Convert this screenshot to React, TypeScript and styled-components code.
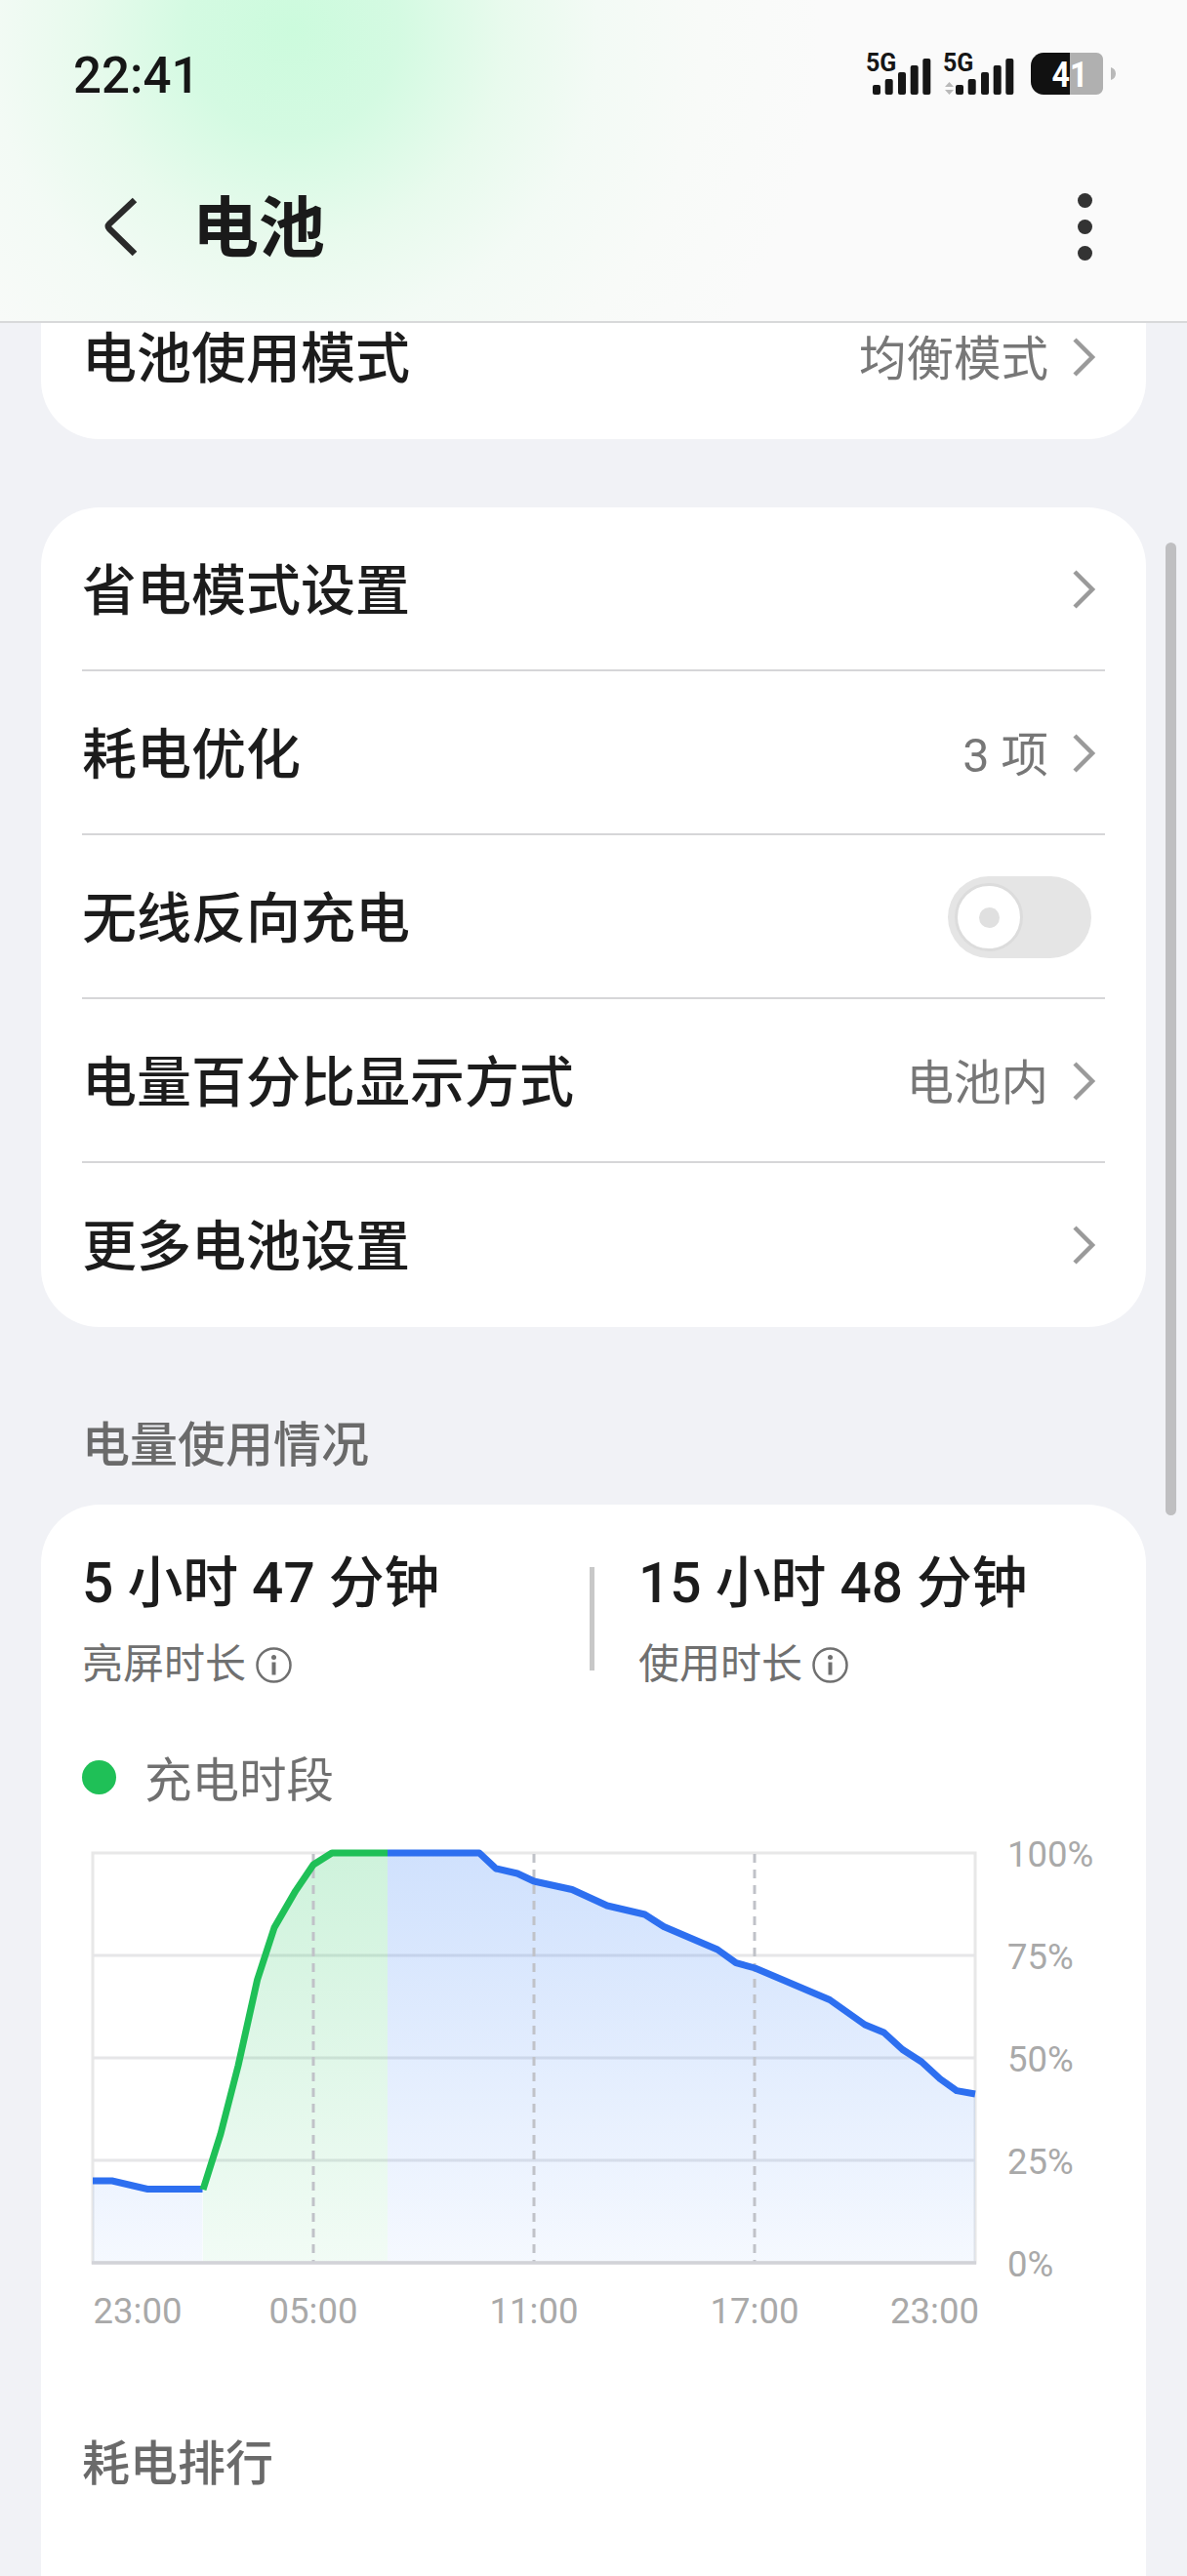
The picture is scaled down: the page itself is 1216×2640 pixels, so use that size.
import styled, { createGlobalStyle } from 'styled-components';

const FONT = `Roboto, "Noto Sans CJK SC", sans-serif`;

const GlobalStyle = createGlobalStyle`
  html, body {
    margin: 0;
    padding: 0;
    background: #f1f2f6;
    font-family: ${FONT};
  }
`;

type RowData = {
  label: string;
  value?: string;
  toggle?: boolean;
};

const rows: RowData[] = [
  { label: '省电模式设置' },
  { label: '耗电优化', value: '3 项' },
  { label: '无线反向充电', toggle: true },
  { label: '电量百分比显示方式', value: '电池内' },
  { label: '更多电池设置' },
];

const blueBefore = '95,2235 115,2235 151,2243.5 207.5,2243.5';
const greenCurve =
  '208,2244 226,2187 244,2117 263.6,2029 281,1975.5 303,1937.6 321,1911 340,1899 397,1899';
const blueAfter =
  '397,1899 491,1899 508,1915 530,1920 547,1928 586,1936.5 622,1953 660.5,1962 680,1974.5 735,1998 754,2011.6 773.5,2017 850,2049.5 886,2075 905.5,2083 924.6,2100.5 944,2113 963,2130.5 980,2142.6 999,2146';

const gridY = [2004, 2109, 2214];
const dashX = [321, 547, 773];
const percents = [
  { y: 1899, text: '100%' },
  { y: 2004, text: '75%' },
  { y: 2109, text: '50%' },
  { y: 2214, text: '25%' },
  { y: 2319, text: '0%' },
];
const barTops = [57, 51, 44, 37, 30];

function StatusIcons() {
  const bars = (xs: number[]) =>
    xs.map((x, i) => (
      <rect key={x} x={x} y={barTops[i]} width={8} height={67 - barTops[i]} rx={2} fill="#161616" />
    ));
  return (
    <svg width={300} height={80} viewBox="0 0 300 80">
      <text x={27} y={43} fontFamily="Roboto, sans-serif" fontWeight={700} fontSize={25} fill="#161616">5G</text>
      {bars([34, 46.7, 60, 72.7, 85.3])}
      <text x={106} y={43} fontFamily="Roboto, sans-serif" fontWeight={700} fontSize={25} fill="#161616">5G</text>
      <path d="M108 59l4.500-5 4.500 5zM108 62h9l-4.500 5z" fill="#b9b9b9" />
      {bars([119, 131.7, 145, 157.7, 170.3])}
      <path d="M236 24h-27c-7 0-13 6-13 13v17c0 7 6 13 13 13h27z" fill="#111" />
      <path d="M236 24h27c4 0 7 3 7 7v29c0 4-3 7-7 7h-27z" fill="#b0b0b0" />
      <path d="M278 39c3 1 5 3 5 6.500s-2 5.500-5 6.500z" fill="#b9b9b9" />
      <text x={236} y={59} textAnchor="middle" textLength={37} lengthAdjust="spacingAndGlyphs" fontFamily="Roboto, sans-serif" fontWeight={700} fontSize={37} fill="#fff">41</text>
    </svg>
  );
}

function BatteryChart() {
  return (
    <ChartSvg viewBox="84 1880 1048 520">
      <defs>
        <linearGradient id="blueFill" gradientUnits="userSpaceOnUse" x1="0" y1="1899" x2="0" y2="2319">
          <stop offset="0" stopColor="#3a82f7" stopOpacity="0.24" />
          <stop offset="1" stopColor="#3a82f7" stopOpacity="0.05" />
        </linearGradient>
        <linearGradient id="greenFill" gradientUnits="userSpaceOnUse" x1="0" y1="1899" x2="0" y2="2319">
          <stop offset="0" stopColor="#22c55e" stopOpacity="0.22" />
          <stop offset="1" stopColor="#22c55e" stopOpacity="0.06" />
        </linearGradient>
      </defs>
      <path d="M95 1899H999V2319H95Z" fill="none" stroke="#e8e8e8" strokeWidth={3} />
      {gridY.map((y) => (
        <line key={y} x1={95} x2={999} y1={y} y2={y} stroke="#e6e6e8" strokeWidth={3} />
      ))}
      <polygon points={`95,2319 ${blueBefore} 207.5,2319`} fill="url(#blueFill)" />
      <polygon points={`208,2319 ${greenCurve} 397,2319`} fill="url(#greenFill)" />
      <polygon points={`397,2319 ${blueAfter} 999,2319`} fill="url(#blueFill)" />
      {dashX.map((x) => (
        <line key={x} x1={x} x2={x} y1={1900} y2={2319} stroke="#c0c2c8" strokeWidth={3} strokeDasharray="9 7" />
      ))}
      <line x1={94} x2={1000} y1={2319} y2={2319} stroke="#d2d3d8" strokeWidth={3.500} />
      <polyline points={blueBefore} fill="none" stroke="#2d6ff0" strokeWidth={7} />
      <polyline points={blueAfter} fill="none" stroke="#2d6ff0" strokeWidth={7} strokeLinejoin="round" />
      <polyline points={greenCurve} fill="none" stroke="#1fc057" strokeWidth={7} strokeLinejoin="round" />
      {percents.map((p) => (
        <AxisText key={p.text} x={1032} y={p.y + 14}>{p.text}</AxisText>
      ))}
      <AxisText x={141} y={2381} textAnchor="middle">23:00</AxisText>
      <AxisText x={321} y={2381} textAnchor="middle">05:00</AxisText>
      <AxisText x={547} y={2381} textAnchor="middle">11:00</AxisText>
      <AxisText x={773} y={2381} textAnchor="middle">17:00</AxisText>
      <AxisText x={1003} y={2381} textAnchor="end">23:00</AxisText>
    </ChartSvg>
  );
}

function Chevron() {
  return (
    <ChevronSvg viewBox="0 0 25 42">
      <path d="M3 3l18 18L3 39" fill="none" stroke="#9a9a9a" strokeWidth={4.500} />
    </ChevronSvg>
  );
}

function InfoIcon() {
  return (
    <InfoSvg viewBox="0 0 37 37">
      <circle cx={18.500} cy={18.500} r={17} fill="none" stroke="#707070" strokeWidth={2.500} />
      <circle cx={18.500} cy={10.500} r={2.500} fill="#707070" />
      <path d="M18.500 15.500v13" stroke="#707070" strokeWidth={4} />
    </InfoSvg>
  );
}

export default function App() {
  return (
    <Page>
      <GlobalStyle />
      <Header>
        <StatusBar>
          <Clock>22:41</Clock>
          <StatusIcons />
        </StatusBar>
        <NavBar>
          <NavLeft>
            <svg width={39} height={62} viewBox="0 0 39 62">
              <path d="M34 4L8 28.500q-2.500 2.500 0 5L34 59" fill="none" stroke="#2a2a2a" strokeWidth={6.500} />
            </svg>
            <Title>电池</Title>
          </NavLeft>
          <Kebab>
            <KebabDot />
            <KebabDot />
            <KebabDot />
          </Kebab>
        </NavBar>
      </Header>

      <ClippedCard>
        <Row $first>
          <RowLabel>电池使用模式</RowLabel>
          <RowRight>
            <RowValue>均衡模式</RowValue>
            <Chevron />
          </RowRight>
        </Row>
      </ClippedCard>

      <Card>
        {rows.map((row) => (
          <Row key={row.label}>
            <RowLabel>{row.label}</RowLabel>
            <RowRight>
              {row.value && <RowValue>{row.value}</RowValue>}
              {row.toggle ? (
                <Toggle>
                  <Knob />
                </Toggle>
              ) : (
                <Chevron />
              )}
            </RowRight>
          </Row>
        ))}
      </Card>

      <SectionHeading>电量使用情况</SectionHeading>

      <UsageCard>
        <Stats>
          <Stat>
            <StatValue>5 小时 47 分钟</StatValue>
            <StatLabel>
              亮屏时长
              <InfoIcon />
            </StatLabel>
          </Stat>
          <StatDivider />
          <Stat>
            <StatValue>15 小时 48 分钟</StatValue>
            <StatLabel>
              使用时长
              <InfoIcon />
            </StatLabel>
          </Stat>
        </Stats>
        <Legend>
          <LegendDot />
          充电时段
        </Legend>
        <BatteryChart />
        <RankHeading>耗电排行</RankHeading>
      </UsageCard>

      <ScrollThumb />
    </Page>
  );
}

const Page = styled.div`
  position: relative;
  width: 1216px;
  height: 2640px;
  overflow: hidden;
  background: #f1f2f6;
`;

const Header = styled.header`
  box-sizing: border-box;
  height: 331px;
  padding-top: 30px;
  background: radial-gradient(circle 540px at 300px 30px, #ccfbdd 0%, #d4fae2 20%, #e8faed 40%, #f3faf5 58%, #f8faf8 78%, #fafafa 100%);
  border-bottom: 2px solid #d8d9da;
`;

const StatusBar = styled.div`
  display: flex;
  justify-content: space-between;
  align-items: center;
  height: 80px;
  padding: 0 56px 0 75px;
`;

const Clock = styled.span`
  margin-top: 14px;
  font-size: 51px;
  font-weight: 500;
  color: #161616;
`;

const NavBar = styled.div`
  display: flex;
  justify-content: space-between;
  align-items: center;
  height: 184px;
  margin-top: 30px;
  padding: 0 97px 0 104px;
`;

const NavLeft = styled.div`
  display: flex;
  align-items: center;
  gap: 57px;
`;

const Title = styled.h1`
  margin: 0 0 -5px -3px;
  font-size: 68px;
  font-weight: 700;
  line-height: 80px;
  color: #1a1a1a;
`;

const Kebab = styled.div`
  display: flex;
  flex-direction: column;
  gap: 12px;
`;

const KebabDot = styled.span`
  width: 15px;
  height: 15px;
  border-radius: 50%;
  background: #333;
`;

const Card = styled.section`
  margin: 70px 42px 0;
  padding: 0 42px;
  background: #fff;
  border-radius: 60px;
`;

const ClippedCard = styled(Card)`
  height: 119px;
  margin-top: 0;
  overflow: hidden;
  border-radius: 0 0 60px 60px;
`;

const Row = styled.div<{ $first?: boolean }>`
  box-sizing: border-box;
  display: flex;
  justify-content: space-between;
  align-items: center;
  height: 168px;
  margin-top: ${(props) => (props.$first ? '-49px' : '0')};
  padding-right: 9px;

  & + & {
    box-shadow: 0 -2px 0 #d6d6d8;
  }
`;

const RowLabel = styled.span`
  margin-bottom: 7px;
  font-size: 56px;
  font-weight: 500;
  color: #1c1c1c;
`;

const RowRight = styled.div`
  display: flex;
  align-items: center;
  gap: 24px;
`;

const RowValue = styled.span`
  margin-bottom: 5px;
  font-size: 48.500px;
  color: #777;
`;

const ChevronSvg = styled.svg`
  display: block;
  width: 25px;
  height: 42px;
`;

const Toggle = styled.div`
  box-sizing: border-box;
  display: flex;
  align-items: center;
  width: 147px;
  height: 84px;
  margin-right: 5px;
  padding-left: 7px;
  background: #e5e5e5;
  border-radius: 42px;
`;

const Knob = styled.div`
  box-sizing: border-box;
  display: flex;
  justify-content: center;
  align-items: center;
  width: 70px;
  height: 70px;
  background: #fff;
  border: 3px solid #dcdcdc;
  border-radius: 50%;

  &::after {
    content: '';
    width: 21px;
    height: 21px;
    background: #e0e0e0;
    border-radius: 50%;
  }
`;

const SectionHeading = styled.h2`
  margin: 92px 0 0 84px;
  font-size: 49px;
  font-weight: 500;
  line-height: 60px;
  color: #6a6a6a;
`;

const UsageCard = styled.section`
  margin: 30px 42px 0;
  padding: 49px 42px 200px;
  background: #fff;
  border-radius: 60px;
`;

const Stats = styled.div`
  display: flex;
  align-items: flex-start;
`;

const Stat = styled.div`
  display: flex;
  flex-direction: column;
  gap: 26px;

  &:first-child {
    width: 520px;
  }
`;

const StatValue = styled.div`
  font-size: 56.800px;
  font-weight: 500;
  line-height: 64px;
  color: #1c1c1c;
  white-space: nowrap;
`;

const StatLabel = styled.div`
  display: flex;
  align-items: center;
  gap: 10px;
  font-size: 42px;
  line-height: 50px;
  color: #707070;
`;

const InfoSvg = styled.svg`
  display: block;
  width: 37px;
  height: 37px;
`;

const StatDivider = styled.div`
  flex: none;
  width: 5px;
  height: 106px;
  margin: 15px 45px 0 0;
  background: #c8c8c8;
`;

const Legend = styled.div`
  display: flex;
  align-items: center;
  gap: 29px;
  height: 60px;
  margin-top: 60px;
  font-size: 48.500px;
  color: #707070;
`;

const LegendDot = styled.span`
  width: 35px;
  height: 35px;
  background: #1fc057;
  border-radius: 50%;
`;

const ChartSvg = styled.svg`
  display: block;
  width: 1048px;
  height: 520px;
  margin-top: 29px;
`;

const AxisText = styled.text`
  font-family: Roboto, sans-serif;
  font-size: 36.500px;
  fill: #a9a9a9;
`;

const RankHeading = styled.h2`
  margin: 96px 0 0;
  font-size: 49px;
  font-weight: 500;
  line-height: 60px;
  color: #6a6a6a;
`;

const ScrollThumb = styled.div`
  position: absolute;
  top: 556px;
  left: 1194px;
  width: 11px;
  height: 997px;
  background: #bfbfc1;
  border-radius: 6px;
`;
